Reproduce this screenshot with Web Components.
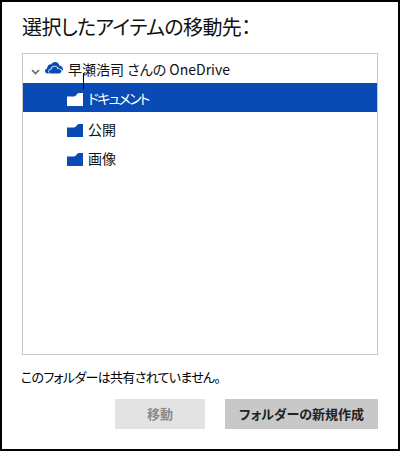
<!DOCTYPE html>
<html lang="ja">
<head>
<meta charset="utf-8">
<title>移動先</title>
<style>
    html, body { margin: 0; padding: 0; background: #fff; }
    body { font-family: "Noto Sans CJK JP", "Noto Sans", sans-serif; color: #000; }
</style>
</head>
<body>
<move-dialog heading="選択したアイテムの移動先：">
    <folder-tree>
        <tree-root>早瀬浩司 さんの OneDrive</tree-root>
        <folder-row selected style="letter-spacing:-1.8px">ドキュメント</folder-row>
        <folder-row>公開</folder-row>
        <folder-row>画像</folder-row>
    </folder-tree>
    <span slot="status">このフォルダーは共有されていません。</span>
    <flat-button slot="actions" disabled style="width:90px">移動</flat-button>
    <flat-button slot="actions" style="width:153px">フォルダーの新規作成</flat-button>
</move-dialog>
<script>
"use strict";
class MoveDialog extends HTMLElement {
    constructor() {
        super();
        this.attachShadow({ mode: "open" });
        this.shadowRoot.innerHTML = `
            <style>
                :host {
                    display: flex;
                    flex-direction: column;
                    box-sizing: border-box;
                    width: 400px;
                    height: 451px;
                    border: 2px solid #000;
                    padding: 0 20px 0 20px;
                    background: #fff;
                    font-feature-settings: "palt";
                }
                h1 {
                    margin: 0;
                    height: 51px;
                    line-height: 50px;
                    font-size: 20px;
                    font-weight: 400;
                    letter-spacing: -0.6px;
                    color: #111;
                    white-space: nowrap;
                }
                .status {
                    margin: 12px 0 0 0;
                    height: 20px;
                    line-height: 20px;
                    font-size: 13px;
                    letter-spacing: -0.7px;
                    color: #000;
                    margin-left: -1px;
                }
                .actions {
                    display: flex;
                    justify-content: flex-end;
                    gap: 20px;
                    margin-top: 12px;
                }
            </style>
            <h1></h1>
            <slot></slot>
            <div class="status"><slot name="status"></slot></div>
            <div class="actions"><slot name="actions"></slot></div>
        `;
    }
    connectedCallback() {
        this.shadowRoot.querySelector("h1").textContent = this.getAttribute("heading");
    }
}
customElements.define("move-dialog", MoveDialog);

class FolderTree extends HTMLElement {
    constructor() {
        super();
        this.attachShadow({ mode: "open" });
        this.shadowRoot.innerHTML = `
            <style>
                :host {
                    display: block;
                    position: relative;
                    box-sizing: border-box;
                    height: 302px;
                    border: 1px solid #c8c8c8;
                    padding-top: 1px;
                }
                .cursor {
                    position: absolute;
                    left: 60px;
                    top: 19px;
                    width: 1px;
                    height: 16px;
                    background: #000;
                }
            </style>
            <slot></slot>
            <div class="cursor"></div>
        `;
    }
}
customElements.define("folder-tree", FolderTree);

class TreeRoot extends HTMLElement {
    constructor() {
        super();
        this.attachShadow({ mode: "open" });
        this.shadowRoot.innerHTML = `
            <style>
                :host {
                    display: flex;
                    align-items: center;
                    height: 28px;
                    padding-left: 8px;
                    font-size: 14px;
                    color: #111;
                    white-space: nowrap;
                }
                svg { display: block; flex: none; }
                .chevron { margin-right: 5px; margin-top: 5px; }
                .cloud { margin-right: 5px; margin-top: -2px; }
            </style>
            <svg class="chevron" width="9" height="6" viewBox="0 0 9 6">
                <path d="M1 1l3.5 3.5L8 1" fill="none" stroke="#666" stroke-width="1.6"/>
            </svg>
            <svg class="cloud" width="18" height="12" viewBox="0 0 18 12">
                <path fill="#0a4ab5" d="M6.500 11.500H2.600C1 11.500 0 10.300 0 9c0-1.200.8-2.200 2-2.500C2.300 3.600 4.300 2 6.300 2.300 7.300.9 8.500 0 10.100 0c2.200 0 4 1.500 4.300 3.600 1.900.2 3.600 1.700 3.600 3.900 0 .6-.1 1-.3 1.400-1-1.700-2.400-2.400-4.100-2.300C12.600 4.500 11 3.700 9.300 3.800 7.500 3.900 6.100 5 5.600 6.900 4.200 7 3.300 8 3.300 9.200c0 1 .5 1.800 1.200 2.300z"/>
                <path fill="#0a4ab5" d="M5.500 11.500c-1 0-1.500-.9-1.500-1.900 0-1.200.9-2 2.400-2 .3-1.900 1.500-3 3.100-3 1.500 0 2.600.8 3.100 2.500 1.700-.3 3.100.4 3.900 1.900-.3 1.500-1.300 2.500-2.700 2.500z"/>
            </svg>
            <slot></slot>
        `;
    }
}
customElements.define("tree-root", TreeRoot);

class FolderRow extends HTMLElement {
    constructor() {
        super();
        this.attachShadow({ mode: "open" });
        this.shadowRoot.innerHTML = `
            <style>
                :host {
                    display: flex;
                    align-items: center;
                    gap: 5px;
                    height: 29px;
                    padding-left: 44px;
                    font-size: 14px;
                    color: #111;
                    --folder: #0a4ab5;
                }
                :host([selected]) {
                    margin-bottom: 2px;
                    background: #0a4ab5;
                    color: #fff;
                    --folder: #fff;
                }
                svg { display: block; flex: none; margin-top: 3px; }
            </style>
            <svg width="16" height="13" viewBox="0 0 16 13">
                <path fill="var(--folder)" d="M0 13V3.500h7c2 0 3-3.500 5-3.500h4V13z"/>
            </svg>
            <slot></slot>
        `;
    }
}
customElements.define("folder-row", FolderRow);

class FlatButton extends HTMLElement {
    constructor() {
        super();
        this.attachShadow({ mode: "open" });
        this.shadowRoot.innerHTML = `
            <style>
                :host {
                    display: flex;
                    align-items: center;
                    justify-content: center;
                    height: 30px;
                    padding-bottom: 1px;
                    box-sizing: border-box;
                    background: #c8c8c8;
                    color: #222;
                    font-size: 13px;
                    font-weight: 700;
                    white-space: nowrap;
                }
                :host([disabled]) {
                    background: #e3e3e3;
                    color: #8a8a8a;
                }
            </style>
            <slot></slot>
        `;
    }
}
customElements.define("flat-button", FlatButton);
</script>
</body>
</html>
